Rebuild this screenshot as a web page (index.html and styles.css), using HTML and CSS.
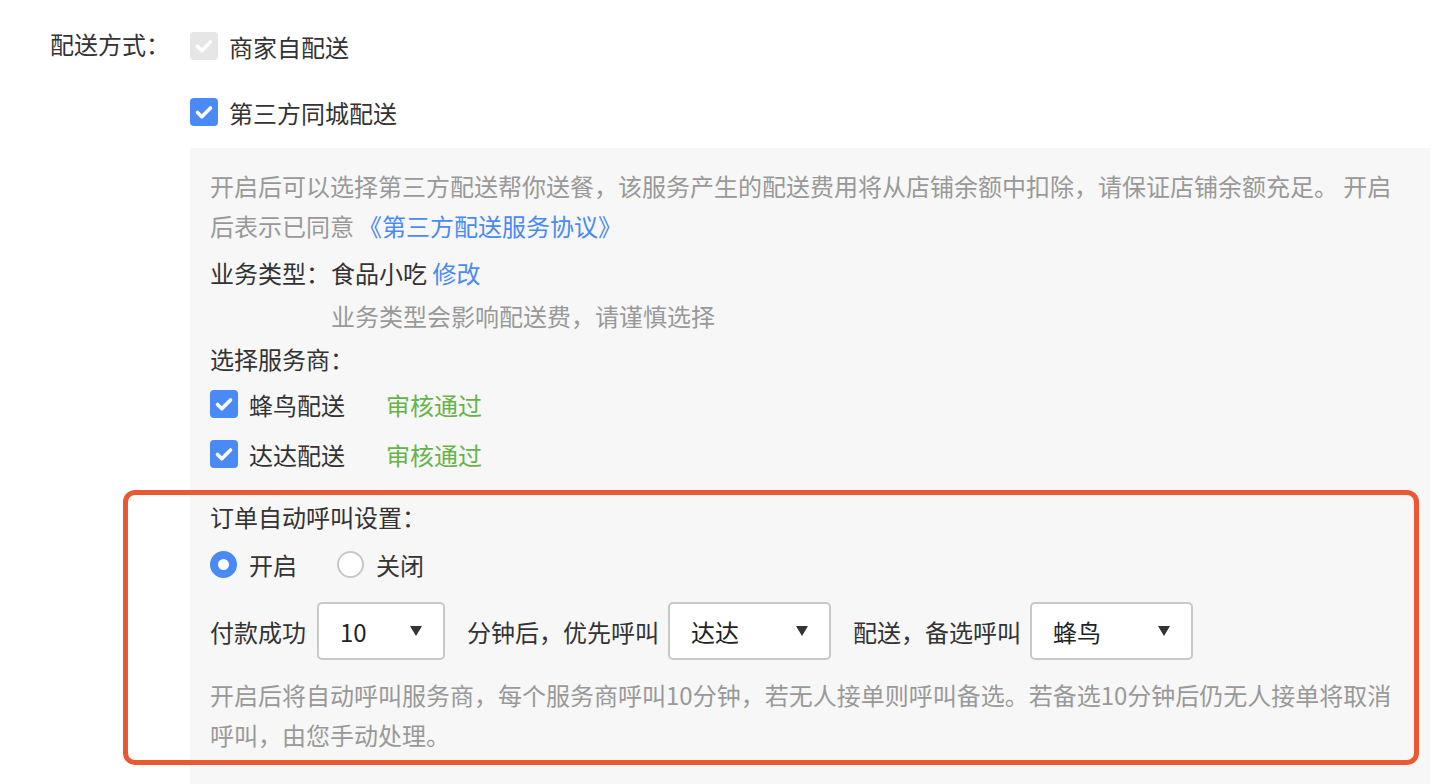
FILE: index.html
```html
<!DOCTYPE html>
<html lang="zh-CN">
<head>
<meta charset="utf-8">
<link rel="stylesheet" href="styles.css">
</head>
<body>
<div class="page">
  <div class="form-row">
    <div class="label">配送方式：</div>
    <div class="options">
      <div class="opt-line first">
        <span class="cbx disabled"><svg viewBox="0 0 28 28"><path d="M7.5 14.5l4.3 4.3 8.7-8.8" /></svg></span>
        <span class="opt-text">商家自配送</span>
      </div>
      <div class="opt-line second">
        <span class="cbx checked"><svg viewBox="0 0 28 28"><path d="M7.5 14.5l4.3 4.3 8.7-8.8" /></svg></span>
        <span class="opt-text">第三方同城配送</span>
      </div>
      <div class="panel">
        <p class="note">开启后可以选择第三方配送帮你送餐，该服务产生的配送费用将从店铺余额中扣除，请保证店铺余额充足。 开启后表示已同意<a class="link agreement">《第三方配送服务协议》</a></p>
        <div class="biz"><span class="biz-label">业务类型：</span>食品小吃 <a class="link">修改</a></div>
        <div class="biz-hint">业务类型会影响配送费，请谨慎选择</div>
        <div class="sub-title">选择服务商：</div>
        <div class="vendor">
          <span class="cbx checked"><svg viewBox="0 0 28 28"><path d="M7.5 14.5l4.3 4.3 8.7-8.8" /></svg></span>
          <span class="vendor-name">蜂鸟配送</span>
          <span class="ok">审核通过</span>
        </div>
        <div class="vendor">
          <span class="cbx checked"><svg viewBox="0 0 28 28"><path d="M7.5 14.5l4.3 4.3 8.7-8.8" /></svg></span>
          <span class="vendor-name">达达配送</span>
          <span class="ok">审核通过</span>
        </div>
        <div class="auto">
          <div class="highlight"></div>
          <div class="auto-title">订单自动呼叫设置：</div>
          <div class="radios">
            <span class="radio on"></span><span class="radio-text">开启</span>
            <span class="radio"></span><span class="radio-text">关闭</span>
          </div>
          <div class="call-row">
            <span>付款成功</span>
            <span class="select s-num"><span class="val">10</span><span class="caret"></span></span>
            <span>分钟后，优先呼叫</span>
            <span class="select s-wide"><span class="val">达达</span><span class="caret"></span></span>
            <span>配送，备选呼叫</span>
            <span class="select s-wide"><span class="val">蜂鸟</span><span class="caret"></span></span>
          </div>
          <p class="note auto-note">开启后将自动呼叫服务商，每个服务商呼叫10分钟，若无人接单则呼叫备选。若备选10分钟后仍无人接单将取消呼叫，由您手动处理。</p>
        </div>
      </div>
    </div>
  </div>
</div>
</body>
</html>
```

FILE: styles.css
```css
html, body {
  margin: 0;
  padding: 0;
  background: #ffffff;
}
body {
  font-family: "PingFang SC", "Noto Sans CJK SC", "Noto Sans", sans-serif;
  font-size: 24px;
  color: #333333;
  overflow: hidden;
  height: 784px;
}
.page {
  padding-left: 50px;
}
.form-row {
  display: flex;
}
.label {
  width: 140px;
  flex: none;
  line-height: 28px;
  margin-top: 30px;
}
.options {
  flex: 1;
  padding-right: 8px;
}
.opt-line {
  display: flex;
  align-items: center;
  height: 28px;
}
.opt-line.first { margin-top: 32px; }
.opt-line.second { margin-top: 38px; }
.opt-text { margin-left: 11px; }
.cbx {
  width: 28px;
  height: 28px;
  border-radius: 4px;
  display: inline-flex;
  flex: none;
}
.cbx svg { width: 28px; height: 28px; }
.cbx path {
  fill: none;
  stroke: #ffffff;
  stroke-width: 3.6;
  stroke-linecap: round;
  stroke-linejoin: round;
}
.cbx.disabled { background: #e6e6e6; }
.cbx.checked { background: #4a8af4; }
.panel {
  margin-top: 22px;
  background: #f7f7f7;
  padding: 18px 20px 40px 20px;
  min-height: 600px;
}
.note {
  margin: 0;
  color: #999999;
  line-height: 40px;
}
.link {
  color: #4a8af4;
  text-decoration: none;
}
.agreement {
  padding-left: 4px;
}
.biz {
  margin-top: 7px;
  line-height: 40px;
}
.biz-label {
  display: inline-block;
  width: 121px;
}
.biz-hint {
  padding-left: 121px;
  color: #999999;
  line-height: 40px;
  margin-top: 3px;
}
.sub-title {
  line-height: 40px;
  margin-top: 3px;
}
.vendor {
  display: flex;
  align-items: center;
  height: 50px;
}
.vendor-name {
  margin-left: 11px;
  width: 137px;
}
.ok { color: #67b34a; }
.auto {
  position: relative;
  margin-top: 14px;
}
.highlight {
  position: absolute;
  left: -87px;
  top: -3px;
  width: 1286px;
  height: 265px;
  border: 5px solid #ea5930;
  border-radius: 12px;
  pointer-events: none;
}
.auto-title {
  line-height: 40px;
  padding-top: 4px;
}
.radios {
  display: flex;
  align-items: center;
  height: 50px;
  margin-top: 2px;
}
.radio {
  width: 27px;
  height: 27px;
  border-radius: 50%;
  box-sizing: border-box;
  border: 2px solid #c8c8c8;
  background: #ffffff;
  flex: none;
}
.radio.on {
  border: 8px solid #4a8af4;
}
.radio-text {
  margin-left: 12px;
  margin-right: 40px;
}
.call-row {
  display: flex;
  align-items: center;
  margin-top: 13px;
  height: 58px;
}
.select {
  box-sizing: border-box;
  height: 58px;
  border: 2px solid #c8c8c8;
  border-radius: 5px;
  background: #ffffff;
  display: flex;
  align-items: center;
  justify-content: space-between;
  padding: 0 21px 0 21px;
  margin: 0 22px 0 11px;
  color: #222222;
}
.s-num { width: 128px; }
.s-wide { width: 163px; margin-left: 9px; }
.caret {
  width: 0;
  height: 0;
  border-left: 6px solid transparent;
  border-right: 6px solid transparent;
  border-top: 10px solid #333333;
}
.auto-note {
  margin-top: 15px;
}
```
